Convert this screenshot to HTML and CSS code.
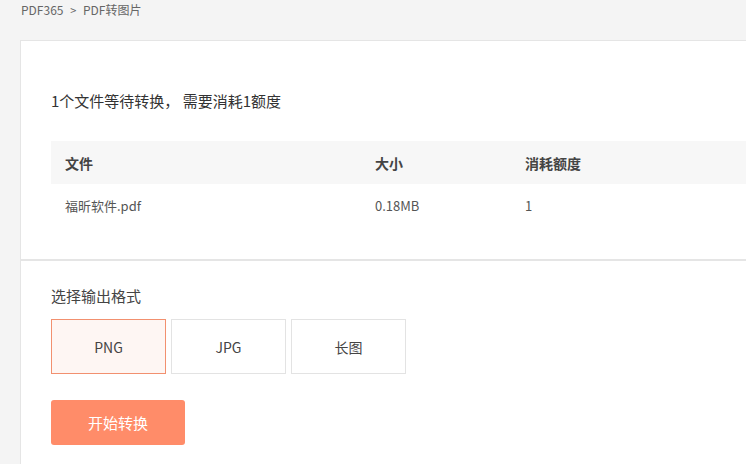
FILE: index.html
```html
<!DOCTYPE html>
<html lang="zh-CN">
<head>
    <meta charset="UTF-8">
    <meta name="viewport" content="width=device-width, initial-scale=1.0">
    <title>PDF转图片</title>
    <link rel="stylesheet" href="styles.css">
</head>
<body>
    <div class="breadcrumb">
        <span>PDF365</span>
        <span class="sep">&gt;</span>
        <span>PDF转图片</span>
    </div>

    <div class="card">
        <div class="section files">
            <p class="summary">1个文件等待转换， 需要消耗1额度</p>
            <table class="file-table">
                <thead>
                    <tr>
                        <th class="col-name">文件</th>
                        <th class="col-size">大小</th>
                        <th>消耗额度</th>
                    </tr>
                </thead>
                <tbody>
                    <tr>
                        <td>福昕软件.pdf</td>
                        <td>0.18MB</td>
                        <td>1</td>
                    </tr>
                </tbody>
            </table>
        </div>

        <div class="section output">
            <p class="label">选择输出格式</p>
            <div class="formats">
                <div class="format active">PNG</div>
                <div class="format">JPG</div>
                <div class="format">长图</div>
            </div>
            <button class="start-btn">开始转换</button>
        </div>
    </div>
</body>
</html>
```

FILE: styles.css
```css
body, html {
    margin: 0;
    height: 100%;
    background: #f4f4f4;
    font-family: "Microsoft YaHei", "Noto Sans CJK SC", sans-serif;
    color: #333;
    overflow: hidden;
}

.breadcrumb {
    height: 40px;
    box-sizing: border-box;
    padding: 2px 0 0 21px;
    font-size: 12px;
    line-height: 16px;
    color: #666;
}

.breadcrumb .sep {
    margin: 0 4px;
    font-size: 11px;
}

.card {
    margin-left: 20px;
    width: 760px;
    min-height: 430px;
    background: #fff;
    border: 1px solid #e5e5e5;
    border-right: none;
}

.section {
    padding-left: 30px;
}

.files {
    padding-top: 50px;
    padding-bottom: 32px;
    border-bottom: 2px solid #e5e5e5;
}

.summary {
    margin: 0 0 30px;
    font-size: 15px;
    line-height: 20px;
    color: #333;
}

.file-table {
    width: 100%;
    border-collapse: collapse;
}

.file-table th,
.file-table td {
    height: 43px;
    padding: 0 0 0 14px;
    text-align: left;
    box-sizing: border-box;
}

.file-table th {
    background: #f7f7f7;
    font-size: 14px;
    font-weight: bold;
    color: #444;
}

.file-table td {
    font-size: 13px;
    color: #555;
}

.col-name {
    width: 310px;
}

.col-size {
    width: 150px;
}

.output {
    padding-top: 25px;
}

.label {
    margin: 0 0 13px;
    font-size: 15px;
    line-height: 20px;
    color: #444;
}

.formats {
    display: flex;
    gap: 5px;
}

.format {
    width: 115px;
    height: 55px;
    box-sizing: border-box;
    border: 1px solid #e3e3e3;
    display: flex;
    justify-content: center;
    align-items: center;
    font-size: 14px;
    color: #444;
}

.format.active {
    border-color: #f2906f;
    background: #fef6f3;
}

.start-btn {
    margin-top: 26px;
    width: 134px;
    height: 45px;
    border: none;
    border-radius: 3px;
    background: #ff8c69;
    color: #fff;
    font-family: inherit;
    font-size: 15px;
}
```
